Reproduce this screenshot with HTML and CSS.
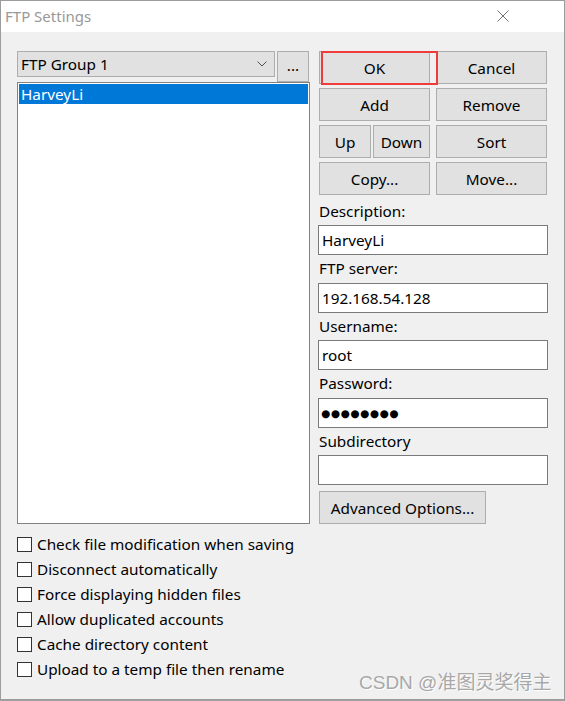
FILE: index.html
```html
<!DOCTYPE html>
<html>
<head>
<meta charset="utf-8">
<link rel="stylesheet" href="styles.css">
</head>
<body>
<div class="window">
  <div class="titlebar">
    <span class="title">FTP Settings</span>
    <svg class="close" width="12" height="12" viewBox="0 0 12 12"><path d="M0.5 0.5 L11.5 11.5 M11.5 0.5 L0.5 11.5" stroke="#707070" stroke-width="1" fill="none"/></svg>
  </div>
  <div class="body">
    <div class="main">
      <div class="left">
        <div class="group-row">
          <div class="combo">
            <span>FTP Group 1</span>
            <svg class="chev" width="10" height="6" viewBox="0 0 10 6"><path d="M0.5 0.5 L5 5 L9.5 0.5" stroke="#505050" stroke-width="1" fill="none"/></svg>
          </div>
          <button class="btn dots">...</button>
        </div>
        <div class="list">
          <div class="item selected">HarveyLi</div>
        </div>
      </div>
      <div class="right">
        <div class="btn-grid">
          <button class="btn">OK</button>
          <button class="btn">Cancel</button>
          <button class="btn">Add</button>
          <button class="btn">Remove</button>
          <div class="pair">
            <button class="btn up">Up</button>
            <button class="btn down">Down</button>
          </div>
          <button class="btn">Sort</button>
          <button class="btn">Copy...</button>
          <button class="btn">Move...</button>
        </div>
        <div class="fields">
          <div class="label">Description:</div>
          <div class="input">HarveyLi</div>
          <div class="label">FTP server:</div>
          <div class="input">192.168.54.128</div>
          <div class="label">Username:</div>
          <div class="input">root</div>
          <div class="label">Password:</div>
          <div class="input pw">●●●●●●●●</div>
          <div class="label">Subdirectory</div>
          <div class="input"></div>
        </div>
        <button class="btn adv">Advanced Options...</button>
      </div>
    </div>
    <div class="checks">
      <div class="check"><span class="box"></span><span>Check file modification when saving</span></div>
      <div class="check"><span class="box"></span><span>Disconnect automatically</span></div>
      <div class="check"><span class="box"></span><span>Force displaying hidden files</span></div>
      <div class="check"><span class="box"></span><span>Allow duplicated accounts</span></div>
      <div class="check"><span class="box"></span><span>Cache directory content</span></div>
      <div class="check"><span class="box"></span><span>Upload to a temp file then rename</span></div>
    </div>
  </div>
  <div class="highlight"></div>
  <div class="watermark">CSDN @准图灵奖得主</div>
</div>
</body>
</html>
```

FILE: styles.css
```css
html, body {
  margin: 0;
  padding: 0;
  background: #a0a0a0;
}
.window {
  position: relative;
  width: 565px;
  height: 700px;
  box-sizing: border-box;
  border: 1px solid #9c9c9c;
  background: #f0f0f0;
  font-family: "Noto Sans", "Noto Sans CJK SC", sans-serif;
  font-size: 15.3px;
  color: #000;
  overflow: hidden;
}
.titlebar {
  height: 31px;
  box-sizing: border-box;
  background: #fff;
  display: flex;
  align-items: center;
  justify-content: space-between;
  padding: 0 55px 1px 4px;
}
.title {
  color: #999;
  font-size: 15px;
}
.close {
  display: block;
}
.body {
  padding: 19px 16px 0 16px;
}
.main {
  display: flex;
  gap: 8px;
}
.left {
  width: 293px;
  display: flex;
  flex-direction: column;
}
.group-row {
  display: flex;
  align-items: flex-start;
  height: 31px;
}
.combo {
  width: 258px;
  height: 26px;
  box-sizing: border-box;
  border: 1px solid #adadad;
  background: #e1e1e1;
  display: flex;
  align-items: center;
  justify-content: space-between;
  padding: 0 7px 0 3px;
}
.btn {
  font: inherit;
  color: #000;
  background: #e1e1e1;
  border: 1px solid #adadad;
  box-sizing: border-box;
  height: 33px;
  padding: 0;
  margin: 0;
  display: flex;
  align-items: center;
  justify-content: center;
}
.dots {
  width: 32px;
  height: 31px;
  margin-left: 2px;
  padding-bottom: 4px;
}
.list {
  height: 442px;
  box-sizing: border-box;
  border: 1px solid #828282;
  background: #fff;
  padding: 1px;
}
.item {
  height: 20px;
  line-height: 20px;
  padding-left: 2px;
}
.item.selected {
  background: #0078d7;
  color: #fff;
}
.right {
  width: 230px;
  display: flex;
  flex-direction: column;
}
.btn-grid {
  display: grid;
  grid-template-columns: 111px 111px;
  column-gap: 6px;
  row-gap: 4px;
  padding-left: 1px;
  margin-bottom: 2.5px;
}
.pair {
  display: flex;
  gap: 2px;
}
.up { width: 52px; }
.down { width: 57px; }
.fields {
  display: flex;
  flex-direction: column;
}
.label {
  height: 27.5px;
  line-height: 26.5px;
  padding-left: 1px;
}
.input {
  height: 30px;
  box-sizing: border-box;
  border: 1px solid #7a7a7a;
  background: #fff;
  padding-left: 3px;
  line-height: 28px;
}
.pw {
  font-family: "DejaVu Sans", sans-serif;
  font-size: 10.5px;
  letter-spacing: 0.6px;
  padding-left: 2px;
}
.adv {
  width: 167px;
  margin-top: 6px;
  margin-left: 1px;
}
.checks {
  margin-top: 7.5px;
  display: flex;
  flex-direction: column;
}
.check {
  height: 25px;
  display: flex;
  align-items: center;
  gap: 5px;
}
.box {
  width: 15px;
  height: 15px;
  box-sizing: border-box;
  border: 1px solid #333;
  background: #fff;
}
.highlight {
  position: absolute;
  left: 320px;
  top: 50px;
  width: 117px;
  height: 34px;
  box-sizing: border-box;
  border: 2px solid #ee3b3b;
}
.watermark {
  position: absolute;
  left: 358px;
  top: 666px;
  font-family: "Liberation Sans", "Noto Sans CJK SC", sans-serif;
  font-size: 19px;
  color: #a8a8a8;
  text-shadow: 1px 1px 0 #fff;
  white-space: nowrap;
}
```
